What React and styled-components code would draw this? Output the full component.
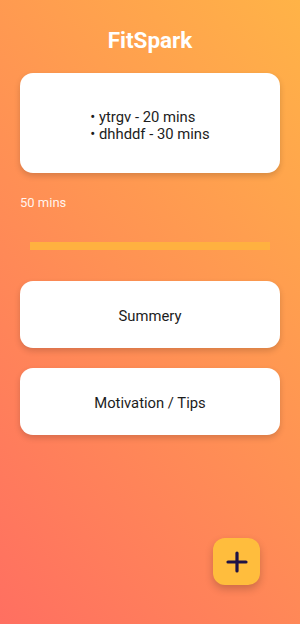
import React from "react";
import styled, { createGlobalStyle } from "styled-components";

const Global = createGlobalStyle`
  html, body { margin: 0; padding: 0; }
  body { font-family: Roboto, "Noto Sans", sans-serif; }
  * { box-sizing: border-box; }
`;

const Screen = styled.div`
  position: relative;
  width: 300px;
  height: 624px;
  overflow: hidden;
  background: linear-gradient(230deg, #ffb347 0%, #ff6f61 100%);
  display: flex;
  flex-direction: column;
  padding: 26px 20px 0;
`;

const Title = styled.h1`
  margin: 0;
  text-align: center;
  color: #fff;
  font-size: 22.5px;
  font-weight: 700;
  line-height: 28px;
`;

const Card = styled.div`
  background: #fff;
  border-radius: 13px;
  box-shadow: 0 3px 6px rgba(0, 0, 0, 0.16);
  display: flex;
  flex-direction: column;
  align-items: center;
  justify-content: center;
  height: ${(p) => p.$h}px;
  margin-top: ${(p) => p.$mt}px;
  padding-top: 4px;
  color: #1c1c1c;
  font-size: 14.8px;
  line-height: 17px;
`;

const List = styled.div`
  display: flex;
  flex-direction: column;
  align-items: flex-start;
  padding-top: 2px;
`;

const Total = styled.div`
  margin-top: 23px;
  color: rgba(255, 255, 255, 0.92);
  font-size: 13px;
  line-height: 14px;
`;

const Bar = styled.div`
  margin: 32px 10px 0;
  height: 8px;
  background: #ffb140;
`;

const Fab = styled.button`
  position: absolute;
  right: 40px;
  bottom: 39px;
  width: 47px;
  height: 47px;
  border: none;
  border-radius: 12px;
  background: #ffbd3d;
  box-shadow: 0 4px 8px rgba(0, 0, 0, 0.2);
  display: flex;
  align-items: center;
  justify-content: center;
  padding: 0;
`;

export default function App() {
  return (
    <>
      <Global />
      <Screen>
        <Title>FitSpark</Title>
        <Card $h={100} $mt={19}>
          <List>
            <div>• ytrgv - 20 mins</div>
            <div>• dhhddf - 30 mins</div>
          </List>
        </Card>
        <Total>50 mins</Total>
        <Bar />
        <Card $h={67} $mt={31}>Summery</Card>
        <Card $h={67} $mt={20}>Motivation / Tips</Card>
        <Fab aria-label="add">
          <svg width="22" height="22" viewBox="0 0 22 22">
            <path d="M11 2v18M2 11h18" stroke="#1e1246" strokeWidth="3.2" strokeLinecap="round" />
          </svg>
        </Fab>
      </Screen>
    </>
  );
}
